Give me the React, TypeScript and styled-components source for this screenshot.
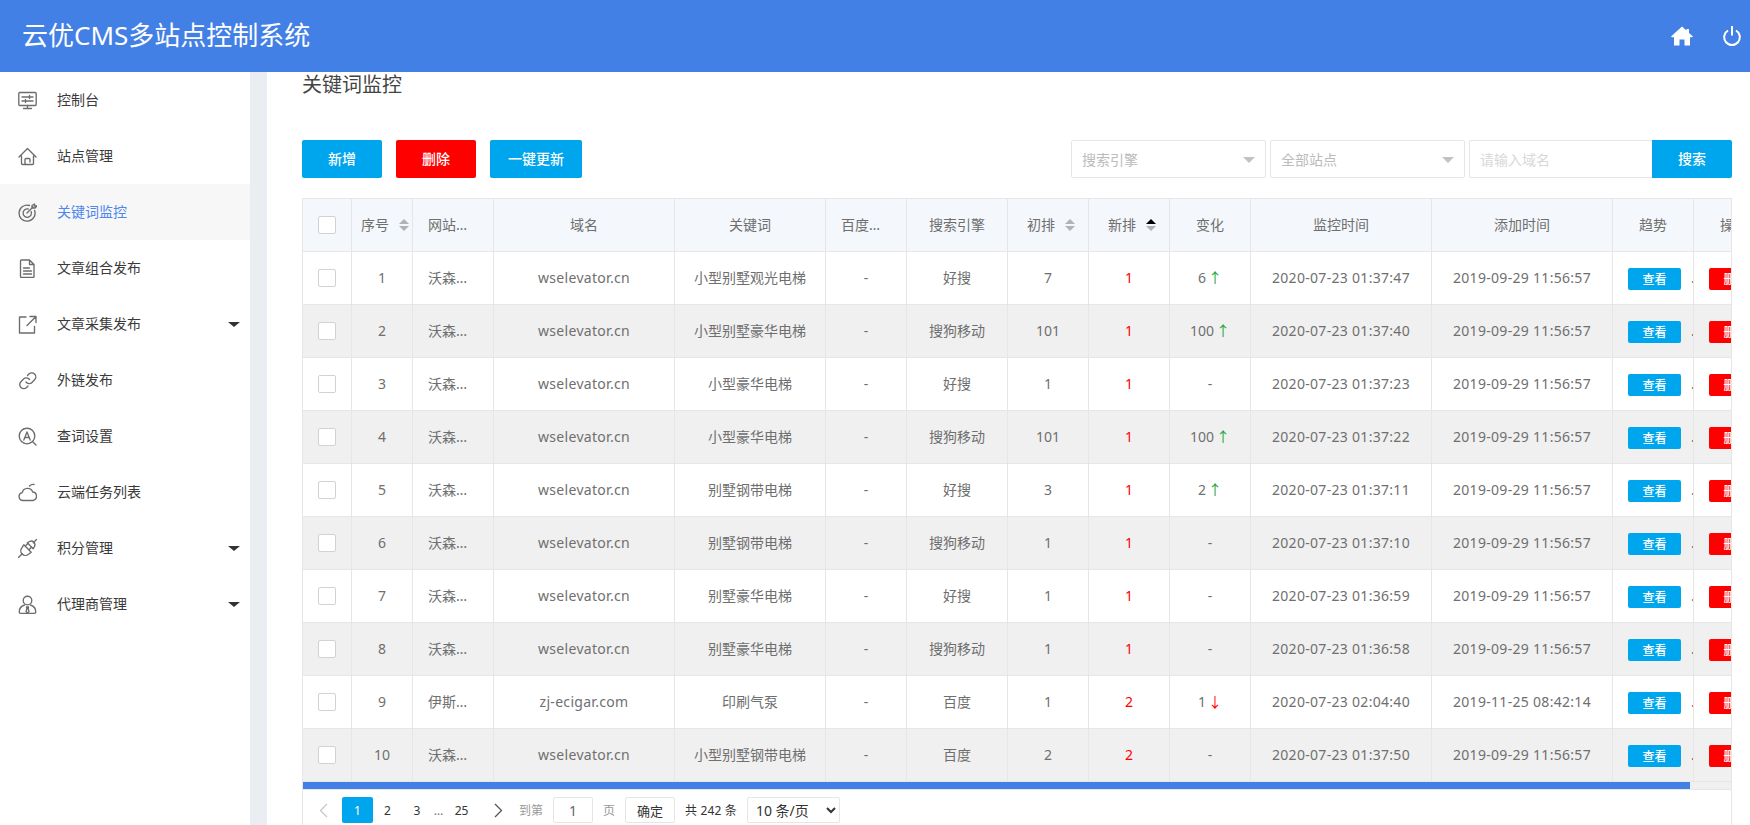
import React from "react";
import styled, { createGlobalStyle } from "styled-components";

const GlobalStyle = createGlobalStyle`
  html, body {
    margin: 0;
    height: 100%;
    overflow: hidden;
    background: #fff;
    font-family: "Noto Sans", "Noto Sans CJK SC", sans-serif;
    font-size: 14px;
    color: #666;
  }
  * { box-sizing: border-box; }
`;

const Page = styled.div`
  width: 1750px;
  height: 825px;
  display: flex;
  flex-direction: column;
  overflow: hidden;
`;

const Header = styled.header`
  flex: 0 0 72px;
  display: flex;
  align-items: center;
  justify-content: space-between;
  padding: 0 9px 0 22px;
  background: #4380e6;
  color: #fff;
`;

const Brand = styled.h1`
  margin: 0 0 4px;
  font-size: 26px;
  font-weight: 400;
`;

const HeaderIcons = styled.div`
  display: flex;
  align-items: center;
  gap: 30px;
`;

const Body = styled.div`
  flex: 1;
  display: flex;
  min-height: 0;
`;

const Sidebar = styled.nav`
  flex: 0 0 250px;
  background: #fff;
`;

const NavItem = styled.div<{ $active?: boolean }>`
  height: 56px;
  display: flex;
  align-items: center;
  padding-left: 18px;
  gap: 20px;
  font-size: 14px;
  color: ${p => (p.$active ? "#4d86ee" : "#3a3a3a")};
  background: ${p => (p.$active ? "#f7f7f7" : "transparent")};
`;

const NavLabel = styled.span`
  margin-bottom: 2px;
`;

const NavGlyph = styled.svg`
  flex: 0 0 19px;
  width: 19px;
  height: 19px;
  fill: none;
  stroke: #6c6c6c;
  stroke-width: 1.35;
  stroke-linecap: round;
  stroke-linejoin: round;
`;

const Caret = styled.span`
  margin-left: auto;
  margin-right: 10px;
  width: 0;
  height: 0;
  border-left: 6px solid transparent;
  border-right: 6px solid transparent;
  border-top: 5px solid #333;
`;

const Gutter = styled.div`
  flex: 0 0 17px;
  background: #eaeef3;
`;

const Main = styled.main`
  flex: 1;
  min-width: 0;
  padding: 0 18px 0 35px;
`;

const PageTitle = styled.h2`
  margin: 0 0 40px;
  height: 28px;
  font-size: 20px;
  line-height: 26px;
  font-weight: 400;
  color: #444;
`;

const Toolbar = styled.div`
  display: flex;
  align-items: center;
  height: 38px;
  margin-bottom: 20px;
`;

const ActionButton = styled.button<{ $danger?: boolean; $wide?: boolean }>`
  width: ${p => (p.$wide ? "92px" : "80px")};
  height: 38px;
  margin-right: 14px;
  padding: 0 0 2px;
  border: none;
  border-radius: 2px;
  font: inherit;
  font-weight: 500;
  color: #fff;
  background: ${p => (p.$danger ? "#ff0000" : "#00a6ed")};
`;

const SearchGroup = styled.div`
  margin-left: auto;
  display: flex;
  gap: 4px;
`;

const FakeSelect = styled.div`
  position: relative;
  width: 195px;
  height: 38px;
  padding-left: 10px;
  display: flex;
  align-items: center;
  border: 1px solid #e6e6e6;
  border-radius: 2px;
  color: #bbb;

  &::after {
    content: "";
    position: absolute;
    right: 10px;
    top: 16px;
    border-left: 6px solid transparent;
    border-right: 6px solid transparent;
    border-top: 6px solid #c2c2c2;
  }
`;

const DomainSearch = styled.div`
  display: flex;
`;

const DomainInput = styled.input`
  width: 183px;
  height: 38px;
  padding-left: 10px;
  border: 1px solid #e6e6e6;
  border-right: none;
  border-radius: 2px 0 0 2px;
  font: inherit;
  outline: none;

  &::placeholder {
    color: #d8d8d8;
    opacity: 1;
  }
`;

const SearchButton = styled.button`
  width: 80px;
  height: 38px;
  padding: 0 0 2px;
  border: none;
  border-radius: 0 2px 2px 0;
  font: inherit;
  font-weight: 500;
  color: #fff;
  background: #00a6ed;
`;

const TableBox = styled.section`
  height: 640px;
  border-left: 1px solid #e6e6e6;
  border-right: 1px solid #e6e6e6;
  border-top: 1px solid #e6e6e6;
`;

const TableClip = styled.div`
  overflow: hidden;
`;

const Table = styled.table`
  width: 1472px;
  table-layout: fixed;
  border-collapse: separate;
  border-spacing: 0;
`;

const Th = styled.th<{ $sortable?: boolean; $left?: boolean }>`
  height: 53px;
  padding: ${p => (p.$sortable ? "0 0 2px 6px" : p.$left ? "0 15px 2px" : "0 0 2px")};
  background: #f4f7fb;
  border-right: 1px solid #e6e6e6;
  border-bottom: 1px solid #e6e6e6;
  font-weight: 400;
  color: #6f6f6f;
  text-align: ${p => (p.$left ? "left" : "center")};
  white-space: nowrap;
  overflow: hidden;
  text-overflow: ellipsis;
`;

const Td = styled.td<{ $left?: boolean; $alt?: boolean; $red?: boolean; $latin?: boolean }>`
  height: 53px;
  padding: ${p => (p.$left ? "0 15px 2px" : "0 0 2px")};
  background: ${p => (p.$alt ? "#f0f0f0" : "#fff")};
  border-right: 1px solid #e6e6e6;
  border-bottom: 1px solid #e6e6e6;
  color: ${p => (p.$red ? "#ff0000" : "#6f6f6f")};
  letter-spacing: ${p => (p.$latin ? "0.3px" : "0")};
  text-align: ${p => (p.$left ? "left" : "center")};
  white-space: nowrap;
  overflow: hidden;
  text-overflow: ellipsis;
`;

const Check = styled.span`
  display: inline-block;
  vertical-align: middle;
  width: 18px;
  height: 18px;
  background: #fff;
  border: 1px solid #d2d2d2;
  border-radius: 2px;
`;

const SortLabel = styled.span`
  display: inline-flex;
  align-items: center;
  gap: 10px;
`;

const SortArrows = styled.span<{ $active?: boolean }>`
  display: inline-flex;
  flex-direction: column;
  gap: 2px;
  margin-top: 2px;

  &::before,
  &::after {
    content: "";
    border-left: 5px solid transparent;
    border-right: 5px solid transparent;
  }
  &::before {
    border-bottom: 5px solid ${p => (p.$active ? "#000" : "#b2b2b2")};
  }
  &::after {
    border-top: 5px solid #b2b2b2;
  }
`;

const Arrow = styled.span<{ $up: boolean }>`
  margin-left: 2px;
  color: ${p => (p.$up ? "#16a833" : "#ff0000")};
`;

const RowActions = styled.div`
  display: flex;
  align-items: center;
  padding-left: 15px;
`;

const MiniButton = styled.button<{ $danger?: boolean }>`
  flex: 0 0 53px;
  height: 22px;
  margin-top: 4px;
  padding: 0 0 1px;
  border: none;
  border-radius: 2px;
  font: inherit;
  font-size: 12px;
  font-weight: 500;
  color: #fff;
  background: ${p => (p.$danger ? "#ff0000" : "#00a6ed")};
`;

const Dot = styled.span`
  margin-left: 10px;
  color: #666;
`;

const ScrollTrack = styled.div`
  height: 8px;
  background: #f0f0f0;
  border-bottom: 1px solid #e6e6e6;
`;

const ScrollThumb = styled.div<{ $w: number }>`
  width: ${p => p.$w}px;
  height: 7px;
  background: #4380e6;
`;

const Pager = styled.div`
  display: flex;
  align-items: center;
  height: 26px;
  margin-top: 7px;
  padding-left: 6px;
  font-size: 12px;
  color: #333;
`;

const PageLink = styled.span<{ $w: number; $current?: boolean; $muted?: boolean }>`
  flex: 0 0 ${p => p.$w}px;
  height: 26px;
  display: flex;
  align-items: center;
  justify-content: center;
  border-radius: 2px;
  color: ${p => (p.$current ? "#fff" : p.$muted ? "#777" : "#333")};
  background: ${p => (p.$current ? "#00a6ed" : "transparent")};
`;

const PrevLink = styled(PageLink)`
  margin-right: 5px;
`;

const Chevron = styled.svg<{ $muted?: boolean }>`
  width: 9px;
  height: 15px;
  fill: none;
  stroke: ${p => (p.$muted ? "#c8c8c8" : "#555")};
  stroke-width: 1.3;
`;

const PagerTail = styled.div`
  display: flex;
  align-items: center;
  gap: 10px;
`;

const PagerNote = styled.span<{ $muted?: boolean }>`
  color: ${p => (p.$muted ? "#999" : "#333")};
  letter-spacing: ${p => (p.$muted ? "0" : "0.15px")};
`;

const JumpInput = styled.input`
  width: 40px;
  height: 26px;
  border: 1px solid #e6e6e6;
  border-radius: 2px;
  font: inherit;
  font-size: 14px;
  color: #666;
  text-align: center;
  outline: none;
`;

const ConfirmButton = styled.button`
  width: 50px;
  height: 26px;
  padding: 0;
  background: #fff;
  border: 1px solid #e6e6e6;
  border-radius: 2px;
  font: inherit;
  font-size: 13px;
  color: #333;
`;

const SizeSelect = styled.select`
  width: 93px;
  height: 26px;
  padding-left: 4px;
  background: #fff;
  border: 1px solid #e6e6e6;
  border-radius: 2px;
  font: inherit;
  font-size: 14px;
  color: #333;
`;

const navItems = [
  {
    label: "控制台",
    icon: (
      <>
        <rect x="0.8" y="1.5" width="17.4" height="13" rx="1" />
        <path d="M9.5 14.5v3M5.5 17.5h8M4 6h11M4 10h11M11.5 4.5v3M7.5 8.5v3" />
      </>
    ),
  },
  {
    label: "站点管理",
    icon: <path d="M1 10 9.5 1.5 18 10M3.5 9v7.5a1 1 0 0 0 1 1h10a1 1 0 0 0 1-1V9M7 17.5v-5a1 1 0 0 1 1-1h3a1 1 0 0 1 1 1v2.5" />,
  },
  {
    label: "关键词监控",
    active: true,
    icon: (
      <>
        <path d="M16.6 7.5a8 8 0 1 1-5.2-5" />
        <path d="M13.2 8.6a4.2 4.2 0 1 1-3-2.6" />
        <path d="M9 10 15 4M14 2.5V5h3l2-2h-2.5V1z" />
      </>
    ),
  },
  {
    label: "文章组合发布",
    icon: (
      <>
        <path d="M3.5 1h8l4.5 4.5v12a1 1 0 0 1-1 1H3.5a1 1 0 0 1-1-1V2a1 1 0 0 1 1-1zM11.5 1v4.5H16" />
        <path d="M5.5 9h6M5.5 12h8M5.5 15h8" />
      </>
    ),
  },
  {
    label: "文章采集发布",
    caret: true,
    icon: <path d="M8 2H1.5v16h15v-6.5M9 10.5 17.5 2M12 1.5h6v6" />,
  },
  {
    label: "外链发布",
    icon: (
      <>
        <path d="M8 11a4 4 0 0 0 6 .4l2.6-2.6a4 4 0 0 0-5.7-5.7L9.5 4.5" />
        <path d="M11.5 8.5a4 4 0 0 0-6-.4l-2.6 2.6a4 4 0 0 0 5.7 5.7l1.4-1.4" />
      </>
    ),
  },
  {
    label: "查词设置",
    icon: (
      <>
        <circle cx="9" cy="9" r="7.8" />
        <path d="M14.5 14.5 18 18M5.8 13 9 5l3.2 8M6.8 10.5h4.4" />
      </>
    ),
  },
  {
    label: "云端任务列表",
    icon: (
      <>
        <path d="M5 17.5a4 4 0 0 1-.8-7.9 5.5 5.5 0 0 1 10.5-.6 4.3 4.3 0 0 1 .3 8.5z" />
        <path d="M11.5 3a5 5 0 0 1 4.5-1.5" />
      </>
    ),
  },
  {
    label: "积分管理",
    caret: true,
    icon: (
      <>
        <path d="M5.8 5.8 13.2 13.2 10.5 15.2a4.6 4.6 0 0 1-6.5-6.5z" />
        <path d="M9.3 3.8 15.2 9.7 16.5 7.5a3.7 3.7 0 0 0-5-5z" />
        <path d="M.5 18.5 4.2 14.8M15.3 3.7 18.5.5M7.8 6.5 9.8 4.5M11.5 10.2 13.5 8.2" />
      </>
    ),
  },
  {
    label: "代理商管理",
    caret: true,
    icon: (
      <>
        <circle cx="9.5" cy="5.5" r="4.3" />
        <path d="M6.5 10C3.5 11 1.2 13.5 1.2 17a1.3 1.3 0 0 0 1.3 1.3h14a1.3 1.3 0 0 0 1.3-1.3c0-3.5-2.3-6-5.3-7" />
        <path d="M8.5 12h2l-.4 1.500.9 3-1.500 1.500-1.500-1.500.9-3z" />
      </>
    ),
  },
];

interface Row {
  id: number;
  site: string;
  domain: string;
  keyword: string;
  engine: string;
  first: number;
  latest: number;
  change?: number;
  up?: boolean;
  watched: string;
  added: string;
}

const ADDED = "2019-09-29 11:56:57";

const rows: Row[] = [
  { id: 1, site: "沃森电梯网", domain: "wselevator.cn", keyword: "小型别墅观光电梯", engine: "好搜", first: 7, latest: 1, change: 6, up: true, watched: "2020-07-23 01:37:47", added: ADDED },
  { id: 2, site: "沃森电梯网", domain: "wselevator.cn", keyword: "小型别墅豪华电梯", engine: "搜狗移动", first: 101, latest: 1, change: 100, up: true, watched: "2020-07-23 01:37:40", added: ADDED },
  { id: 3, site: "沃森电梯网", domain: "wselevator.cn", keyword: "小型豪华电梯", engine: "好搜", first: 1, latest: 1, watched: "2020-07-23 01:37:23", added: ADDED },
  { id: 4, site: "沃森电梯网", domain: "wselevator.cn", keyword: "小型豪华电梯", engine: "搜狗移动", first: 101, latest: 1, change: 100, up: true, watched: "2020-07-23 01:37:22", added: ADDED },
  { id: 5, site: "沃森电梯网", domain: "wselevator.cn", keyword: "别墅钢带电梯", engine: "好搜", first: 3, latest: 1, change: 2, up: true, watched: "2020-07-23 01:37:11", added: ADDED },
  { id: 6, site: "沃森电梯网", domain: "wselevator.cn", keyword: "别墅钢带电梯", engine: "搜狗移动", first: 1, latest: 1, watched: "2020-07-23 01:37:10", added: ADDED },
  { id: 7, site: "沃森电梯网", domain: "wselevator.cn", keyword: "别墅豪华电梯", engine: "好搜", first: 1, latest: 1, watched: "2020-07-23 01:36:59", added: ADDED },
  { id: 8, site: "沃森电梯网", domain: "wselevator.cn", keyword: "别墅豪华电梯", engine: "搜狗移动", first: 1, latest: 1, watched: "2020-07-23 01:36:58", added: ADDED },
  { id: 9, site: "伊斯卡电子烟", domain: "zj-ecigar.com", keyword: "印刷气泵", engine: "百度", first: 1, latest: 2, change: 1, up: false, watched: "2020-07-23 02:04:40", added: "2019-11-25 08:42:14" },
  { id: 10, site: "沃森电梯网", domain: "wselevator.cn", keyword: "小型别墅钢带电梯", engine: "百度", first: 2, latest: 2, watched: "2020-07-23 01:37:50", added: ADDED },
];

const columnWidths = [49, 61, 81, 181, 151, 81, 101, 81, 81, 81, 181, 181, 81, 81];

export default function App(): JSX.Element {
  return (
    <Page>
      <GlobalStyle />
      <Header>
        <Brand>云优CMS多站点控制系统</Brand>
        <HeaderIcons>
          <svg width="22" height="20" viewBox="0 0 22 20" fill="#fff">
            <path d="M11 .5 15.5 4.5V3H18v4L22 10.4l-.9.9H19V19.5h-5.5v-6h-5v6H3V11.3H.9L0 10.4z" />
          </svg>
          <svg width="18" height="20" viewBox="0 0 18 20" fill="none" stroke="#fff" strokeWidth="2">
            <path d="M5 4.5a7.8 7.8 0 1 0 8 0M9 0v9.5" />
          </svg>
        </HeaderIcons>
      </Header>
      <Body>
        <Sidebar>
          {navItems.map(item => (
            <NavItem key={item.label} $active={item.active}>
              <NavGlyph viewBox="0 0 19 19">{item.icon}</NavGlyph>
              <NavLabel>{item.label}</NavLabel>
              {item.caret && <Caret />}
            </NavItem>
          ))}
        </Sidebar>
        <Gutter />
        <Main>
          <PageTitle>关键词监控</PageTitle>
          <Toolbar>
            <ActionButton>新增</ActionButton>
            <ActionButton $danger>删除</ActionButton>
            <ActionButton $wide>一键更新</ActionButton>
            <SearchGroup>
              <FakeSelect>搜索引擎</FakeSelect>
              <FakeSelect>全部站点</FakeSelect>
              <DomainSearch>
                <DomainInput placeholder="请输入域名" />
                <SearchButton>搜索</SearchButton>
              </DomainSearch>
            </SearchGroup>
          </Toolbar>
          <TableBox>
            <TableClip>
              <Table>
                <colgroup>
                  {columnWidths.map((w, i) => (
                    <col key={i} width={w} />
                  ))}
                </colgroup>
                <thead>
                  <tr>
                    <Th><Check /></Th>
                    <Th $sortable><SortLabel>序号<SortArrows /></SortLabel></Th>
                    <Th $left>网站名称</Th>
                    <Th>域名</Th>
                    <Th>关键词</Th>
                    <Th $left>百度权重</Th>
                    <Th>搜索引擎</Th>
                    <Th $sortable><SortLabel>初排<SortArrows /></SortLabel></Th>
                    <Th $sortable><SortLabel>新排<SortArrows $active /></SortLabel></Th>
                    <Th>变化</Th>
                    <Th>监控时间</Th>
                    <Th>添加时间</Th>
                    <Th>趋势</Th>
                    <Th>操作</Th>
                  </tr>
                </thead>
                <tbody>
                  {rows.map((row, i) => {
                    const alt = i % 2 === 1;
                    return (
                      <tr key={row.id}>
                        <Td $alt={alt}><Check /></Td>
                        <Td $alt={alt}>{row.id}</Td>
                        <Td $alt={alt} $left>{row.site}</Td>
                        <Td $alt={alt} $latin>{row.domain}</Td>
                        <Td $alt={alt}>{row.keyword}</Td>
                        <Td $alt={alt}>-</Td>
                        <Td $alt={alt}>{row.engine}</Td>
                        <Td $alt={alt}>{row.first}</Td>
                        <Td $alt={alt} $red>{row.latest}</Td>
                        <Td $alt={alt}>
                          {row.change === undefined ? "-" : (
                            <>
                              {row.change}
                              <Arrow $up={!!row.up}>{row.up ? "↑" : "↓"}</Arrow>
                            </>
                          )}
                        </Td>
                        <Td $alt={alt} $latin>{row.watched}</Td>
                        <Td $alt={alt} $latin>{row.added}</Td>
                        <Td $alt={alt}>
                          <RowActions>
                            <MiniButton>查看</MiniButton>
                            <Dot>.</Dot>
                          </RowActions>
                        </Td>
                        <Td $alt={alt}>
                          <RowActions>
                            <MiniButton $danger>删除</MiniButton>
                          </RowActions>
                        </Td>
                      </tr>
                    );
                  })}
                </tbody>
              </Table>
            </TableClip>
            <ScrollTrack>
              <ScrollThumb $w={1387} />
            </ScrollTrack>
            <Pager>
              <PrevLink $w={28} $muted>
                <Chevron $muted viewBox="0 0 9 15"><path d="M8 1 1.5 7.5 8 14" /></Chevron>
              </PrevLink>
              <PageLink $w={31} $current>1</PageLink>
              <PageLink $w={29}>2</PageLink>
              <PageLink $w={30}>3</PageLink>
              <PageLink $w={13} $muted>…</PageLink>
              <PageLink $w={33}>25</PageLink>
              <PageLink $w={41}>
                <Chevron viewBox="0 0 9 15"><path d="M1 1l6.5 6.5L1 14" /></Chevron>
              </PageLink>
              <PagerTail>
                <PagerNote $muted>到第</PagerNote>
                <JumpInput defaultValue="1" />
                <PagerNote $muted>页</PagerNote>
                <ConfirmButton>确定</ConfirmButton>
                <PagerNote>共 242 条</PagerNote>
                <SizeSelect defaultValue="10">
                  <option value="10">10 条/页</option>
                  <option value="20">20 条/页</option>
                </SizeSelect>
              </PagerTail>
            </Pager>
          </TableBox>
        </Main>
      </Body>
    </Page>
  );
}
